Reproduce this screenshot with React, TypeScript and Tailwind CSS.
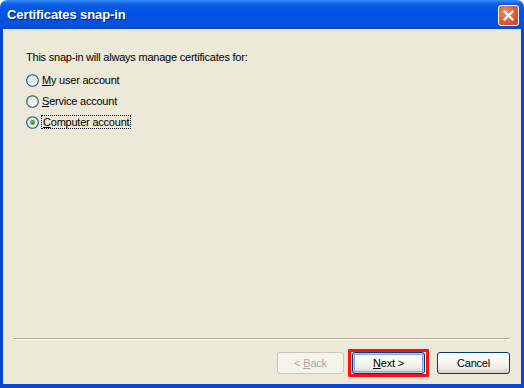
import React from "react";

function Radio({ checked }: { checked?: boolean }) {
  return (
    <svg width="13" height="13" viewBox="0 0 13 13" className="shrink-0">
      <defs>
        <linearGradient id="rg" x1="0" y1="0" x2="1" y2="1">
          <stop offset="0" stopColor="#dcdcd4" />
          <stop offset="1" stopColor="#ffffff" />
        </linearGradient>
      </defs>
      <circle cx="6.5" cy="6.5" r="5.8" fill="url(#rg)" stroke="#1c5180" strokeWidth="1.1" />
      {checked && (
        <>
          <circle cx="6.5" cy="6.5" r="2.4" fill="#21a121" />
          <circle cx="6" cy="6" r="1" fill="#6fd36f" />
        </>
      )}
    </svg>
  );
}

export default function App() {
  const font = { fontFamily: '"Liberation Sans", Arial, sans-serif' };
  return (
    <div className="w-[524px] h-[388px] flex flex-col bg-white overflow-hidden" style={font}>
      {/* Title bar */}
      <div className="h-[29px] shrink-0 rounded-t-[7px] flex items-center justify-between pl-[7px] pr-[5px] bg-[linear-gradient(to_bottom,#3c8ff7_0px,#0a5ee8_4px,#0055e5_10px,#0053e1_20px,#0a4fd8_26px,#0846d0_29px)]">
        <span className="text-white font-bold text-[13px] tracking-[-0.1px] [text-shadow:1px_1px_0_#0a1e70]">
          Certificates snap-in
        </span>
        <div className="w-[21px] h-[21px] rounded-[3px] border border-white bg-[radial-gradient(circle_at_35%_35%,#f08d6f,#e2562f_60%,#c9411c)] flex items-center justify-center mt-[1px]">
          <svg width="11" height="11" viewBox="0 0 11 11">
            <path d="M1.5 1.5 L9.5 9.5 M9.5 1.5 L1.5 9.5" stroke="white" strokeWidth="2" strokeLinecap="square" />
          </svg>
        </div>
      </div>
      {/* Frame */}
      <div className="flex-1 flex bg-[#0846d6] px-[3px] pb-[4px]">
        <div className="flex-1 bg-[#ece9d8] flex flex-col text-[11px] tracking-[-0.22px] text-black">
          <div className="pl-[23px] pt-[22px]">
            <div className="h-[13px] leading-[13px]">This snap-in will always manage certificates for:</div>
            <div className="mt-[9px] flex flex-col gap-[7px]">
              <div className="flex items-center gap-[2px] h-[14px]">
                <Radio />
                <span className="leading-[13px] px-[1px]"><span className="underline">M</span>y user account</span>
              </div>
              <div className="flex items-center gap-[2px] h-[14px]">
                <Radio />
                <span className="leading-[13px] px-[1px]"><span className="underline">S</span>ervice account</span>
              </div>
              <div className="flex items-center gap-[2px] h-[14px]">
                <Radio checked />
                <span className="leading-[12px] px-[1px] border border-dotted border-black"><span className="underline">C</span>omputer account</span>
              </div>
            </div>
          </div>
          <div className="flex-1" />
          <div className="mx-[11px] h-[2px] border-t border-[#aca899] border-b-white border-b" />
          <div className="flex items-center justify-end pr-[11px] pt-[9px] pb-[7px]">
            <div className="w-[67px] h-[22px] rounded-[3px] border border-[#c9c7ba] bg-[#f5f4ea] text-[#aca899] flex items-center justify-center">
              &lt; <span className="underline ml-[3px]">B</span>ack
            </div>
            <div className="ml-[4px] px-[1px] border-[3px] border-[#ff1010] rounded-[1px]">
              <div className="w-[73px] h-[22px] rounded-[3px] border border-[#003c74] bg-[linear-gradient(to_bottom,#ffffff,#f0f0ea_70%,#d6d0c5)] shadow-[inset_0_0_0_1px_#aecbf5,inset_0_0_0_2px_#86a8e8] flex items-center justify-center">
                <span className="underline">N</span>ext &gt;
              </div>
            </div>
            <div className="ml-[8px] w-[73px] h-[22px] rounded-[3px] border border-[#003c74] bg-[linear-gradient(to_bottom,#ffffff,#f0f0ea_70%,#d6d0c5)] flex items-center justify-center">
              Cancel
            </div>
          </div>
        </div>
      </div>
    </div>
  );
}
